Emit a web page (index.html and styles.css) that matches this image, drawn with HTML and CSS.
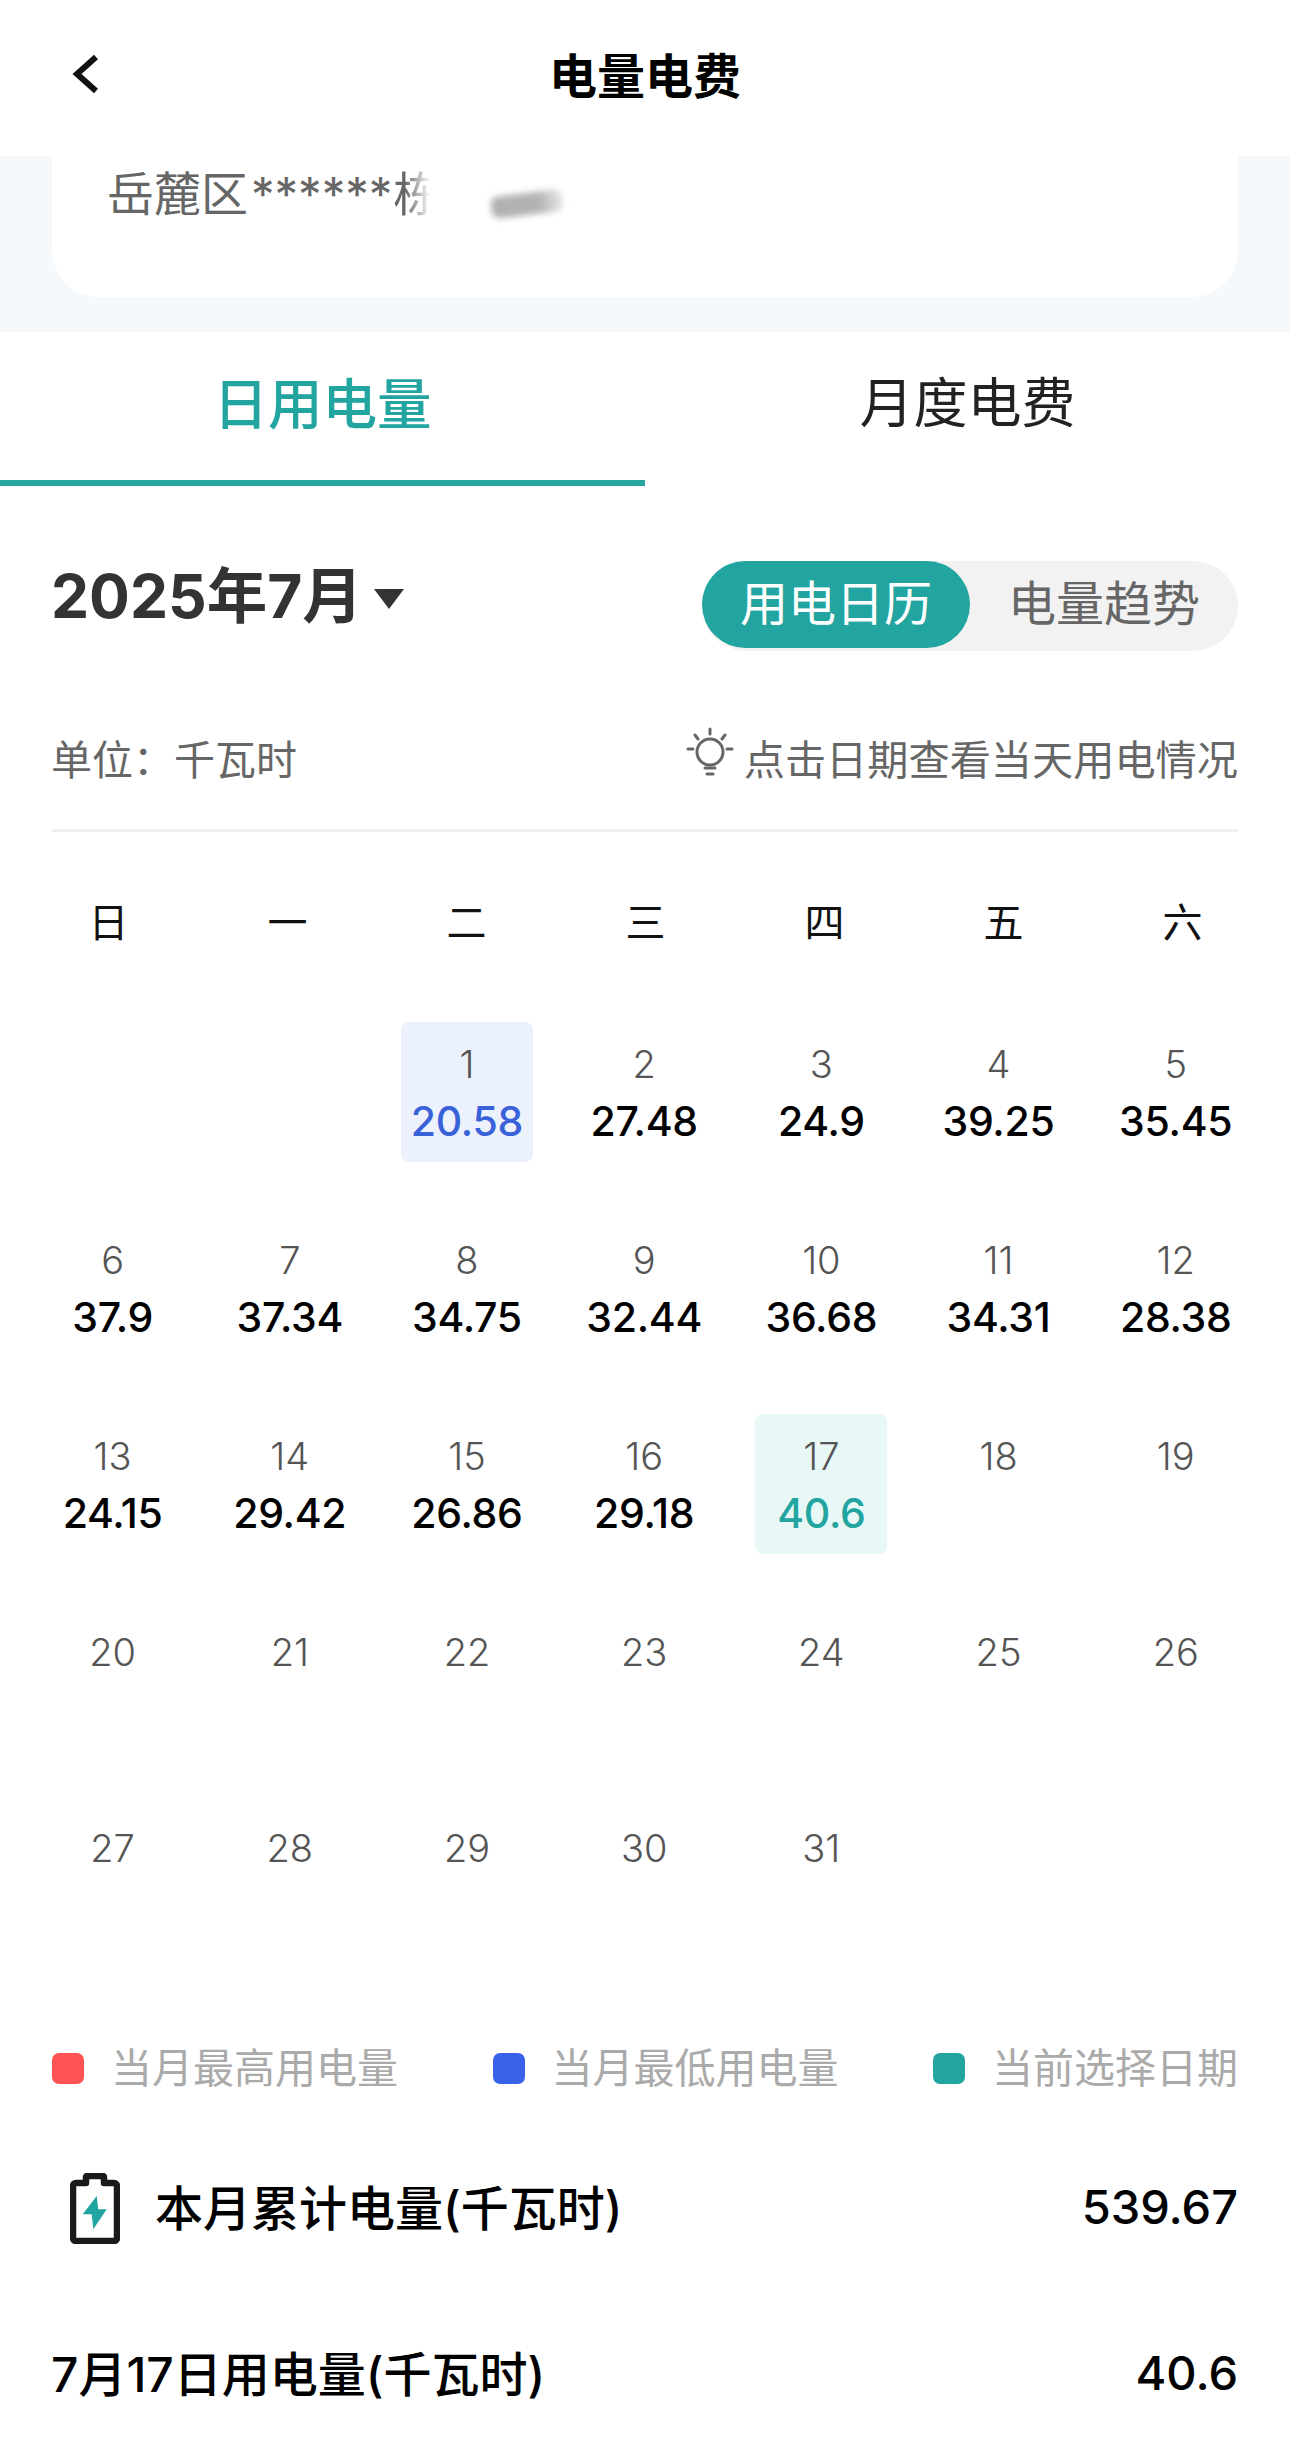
FILE: index.html
```html
<!DOCTYPE html>
<html lang="zh-CN">
<head>
    <meta charset="UTF-8">
    <meta name="viewport" content="width=device-width, initial-scale=1.0">
    <title>电量电费</title>
    <link rel="stylesheet" href="styles.css">
</head>

<body>
    <header class="topbar">
        <svg class="back-icon" width="27" height="40" viewBox="0 0 27 40"><path d="M24 3 5 20l19 17" fill="none" stroke="#111" stroke-width="6"/></svg>
        <h1>电量电费</h1>
    </header>

    <section class="address-band">
        <div class="address-card">
            <span>岳麓区</span><span class="stars">******</span><span class="address-fade">栋</span><span class="smudge"></span>
        </div>
    </section>

    <nav class="tabs">
        <div class="tab active">日用电量</div>
        <div class="tab">月度电费</div>
    </nav>

    <section class="month-row">
        <div class="month-title">2025年7月<span class="month-arrow"></span></div>
        <div class="switcher">
            <div class="switch-item on">用电日历</div>
            <div class="switch-item">电量趋势</div>
        </div>
    </section>

    <section class="unit-row">
        <div class="unit">单位：千瓦时</div>
        <div class="hint">
            <svg class="bulb" width="48" height="50" viewBox="0 0 48 50" fill="none" stroke="#666" stroke-width="3" stroke-linecap="round">
                <circle cx="24" cy="25" r="13"/>
                <path d="M24 2v5M9 8l3 4M39 8l-3 4M2 22h5M41 22h5M19 41h10M21 47h6"/>
            </svg>
            点击日期查看当天用电情况
        </div>
    </section>

    <div class="week">
        <div>日</div><div>一</div><div>二</div><div>三</div><div>四</div><div>五</div><div>六</div>
    </div>

    <div class="days">
        <div class="day"></div>
        <div class="day"></div>
        <div class="day lowest"><span class="num">1</span><span class="val">20.58</span></div>
        <div class="day"><span class="num">2</span><span class="val">27.48</span></div>
        <div class="day"><span class="num">3</span><span class="val">24.9</span></div>
        <div class="day"><span class="num">4</span><span class="val">39.25</span></div>
        <div class="day"><span class="num">5</span><span class="val">35.45</span></div>

        <div class="day"><span class="num">6</span><span class="val">37.9</span></div>
        <div class="day"><span class="num">7</span><span class="val">37.34</span></div>
        <div class="day"><span class="num">8</span><span class="val">34.75</span></div>
        <div class="day"><span class="num">9</span><span class="val">32.44</span></div>
        <div class="day"><span class="num">10</span><span class="val">36.68</span></div>
        <div class="day"><span class="num">11</span><span class="val">34.31</span></div>
        <div class="day"><span class="num">12</span><span class="val">28.38</span></div>

        <div class="day"><span class="num">13</span><span class="val">24.15</span></div>
        <div class="day"><span class="num">14</span><span class="val">29.42</span></div>
        <div class="day"><span class="num">15</span><span class="val">26.86</span></div>
        <div class="day"><span class="num">16</span><span class="val">29.18</span></div>
        <div class="day selected"><span class="num">17</span><span class="val">40.6</span></div>
        <div class="day"><span class="num">18</span></div>
        <div class="day"><span class="num">19</span></div>

        <div class="day"><span class="num">20</span></div>
        <div class="day"><span class="num">21</span></div>
        <div class="day"><span class="num">22</span></div>
        <div class="day"><span class="num">23</span></div>
        <div class="day"><span class="num">24</span></div>
        <div class="day"><span class="num">25</span></div>
        <div class="day"><span class="num">26</span></div>

        <div class="day"><span class="num">27</span></div>
        <div class="day"><span class="num">28</span></div>
        <div class="day"><span class="num">29</span></div>
        <div class="day"><span class="num">30</span></div>
        <div class="day"><span class="num">31</span></div>
    </div>

    <div class="legend">
        <div class="legend-item"><span class="dot red"></span>当月最高用电量</div>
        <div class="legend-item"><span class="dot blue"></span>当月最低用电量</div>
        <div class="legend-item"><span class="dot teal"></span>当前选择日期</div>
    </div>

    <div class="total-row first">
        <div class="total-label">
            <svg class="battery" width="50" height="71" viewBox="0 0 50 71">
                <path d="M16 10V4a1 1 0 0 1 1-1h16a1 1 0 0 1 1 1v6h10a3 3 0 0 1 3 3v52a3 3 0 0 1-3 3H6a3 3 0 0 1-3-3V13a3 3 0 0 1 3-3z" fill="#fff" stroke="#1a1a1a" stroke-width="6.5" stroke-linejoin="round"/>
                <path d="M26.7 23 12.7 41.3h9l1.6 15 13.4-20h-8.4z" fill="#22a5a0"/>
            </svg>
            本月累计电量(千瓦时)
        </div>
        <div class="total-value">539.67</div>
    </div>
    <div class="total-row second">
        <div class="total-label">7月17日用电量(千瓦时)</div>
        <div class="total-value">40.6</div>
    </div>
</body>
</html>
```

FILE: styles.css
```css
body {
    font-family: Inter, "Noto Sans CJK SC", sans-serif;
    margin: 0;
    padding: 0;
    background-color: #fff;
    color: #000;
    width: 1290px;
    height: 2446px;
    overflow: hidden;
}

.topbar {
    height: 156px;
    display: grid;
    grid-template-columns: 1fr auto 1fr;
    align-items: center;
    padding: 0 0 10px;
    box-sizing: border-box;
}

.back-icon {
    margin: 2px 0 0 72px;
}

h1 {
    font-size: 48px;
    font-weight: 700;
    margin: 0;
    grid-column: 2;
}

.address-band {
    height: 176px;
    box-sizing: border-box;
    padding: 0 52px 35px;
    background-color: #f5f9fc;
}

.address-card {
    height: 141px;
    box-sizing: border-box;
    padding-left: 55px;
    background: #fff;
    border-radius: 0 0 47px 47px;
    display: flex;
    font-size: 47px;
    line-height: 76px;
    color: #666;
}

.stars {
    margin-left: 3px;
}

.address-fade {
    margin-left: 1px;
    background: linear-gradient(90deg, #666 25%, #fff 80%);
    -webkit-background-clip: text;
    background-clip: text;
    color: transparent;
}

.smudge {
    width: 72px;
    height: 22px;
    margin: 37px 0 0 51px;
    border-radius: 8px;
    background: linear-gradient(90deg, #b2b2b2 65%, #e8e8e8);
    filter: blur(3px);
    transform: rotate(-7deg);
}

.tabs {
    display: flex;
    height: 154px;
}

.tab {
    flex: 1;
    text-align: center;
    font-size: 54px;
    font-weight: 400;
    line-height: 144px;
    color: #222;
}

    .tab.active {
        color: #22a5a0;
        font-size: 54.5px;
        font-weight: 500;
        border-bottom: 6px solid #26a69f;
        height: 148px;
    }

.month-row {
    display: flex;
    justify-content: space-between;
    align-items: flex-start;
    margin: 75px 52px 0;
}

.month-title {
    display: flex;
    align-items: center;
    font-size: 60.5px;
    font-weight: 700;
    line-height: 70px;
    color: #333;
    margin-left: -1px;
}

.month-arrow {
    width: 0;
    height: 0;
    margin: 6px 0 0 11px;
    border-left: 15px solid transparent;
    border-right: 15px solid transparent;
    border-top: 20px solid #333;
}

.switcher {
    display: flex;
    width: 536px;
    height: 90px;
    border-radius: 45px;
    background: #f2f2f2;
}

.switch-item {
    flex: 1;
    text-align: center;
    font-size: 48px;
    line-height: 86px;
    color: #666;
}

    .switch-item.on {
        flex: 0 0 268px;
        height: 87px;
        border-radius: 44px;
        background: #22a5a0;
        color: #fff;
    }

.unit-row {
    display: flex;
    justify-content: space-between;
    align-items: center;
    margin: 84px 52px 0;
    height: 50px;
    padding-bottom: 44px;
    border-bottom: 3px solid #f0f0f0;
    color: #666;
    line-height: 50px;
}

.unit {
    font-size: 41px;
    margin-left: -1px;
}

.hint {
    display: flex;
    font-size: 41.2px;
}

.bulb {
    margin: -8px 10px 0 0;
}

.week {
    display: grid;
    grid-template-columns: repeat(7, 179px);
    margin: 66px 19px 0;
    text-align: center;
    font-size: 40px;
    line-height: 50px;
    color: #111;
}

.days {
    display: grid;
    grid-template-columns: repeat(7, 177.2px);
    grid-auto-rows: 196px;
    margin: 46px 24px 0;
}

.day {
    width: 132px;
    height: 140px;
    margin: 28px auto 0;
    box-sizing: border-box;
    padding-top: 17px;
    border-radius: 8px;
    text-align: center;
}

.num {
    display: block;
    font-size: 38px;
    font-weight: 300;
    line-height: 50px;
    color: #555;
}

.val {
    display: block;
    font-size: 41px;
    font-weight: 500;
    letter-spacing: -0.3px;
    line-height: 64px;
    white-space: nowrap;
}

.lowest {
    background: #ebf1fd;
}

    .lowest .val {
        color: #3a62d8;
    }

.selected {
    background: #e8f8f7;
}

    .selected .val {
        color: #22a5a0;
    }

.legend {
    display: flex;
    justify-content: space-between;
    margin: 69px 52px 0;
    font-size: 41px;
    line-height: 50px;
    color: #aaa;
}

.legend-item {
    display: flex;
    align-items: center;
}

.dot {
    width: 32px;
    height: 31px;
    margin-right: 27px;
    border-radius: 7px;
}

.red {
    background: #ff5252;
}

.blue {
    background: #3a62e8;
}

.teal {
    background: #22a5a0;
}

.total-row {
    display: flex;
    justify-content: space-between;
    align-items: center;
    height: 80px;
    margin: 0 52px;
}

    .total-row.first {
        margin-top: 72px;
    }

    .total-row.second {
        margin-top: 86px;
    }

.total-label {
    display: flex;
    align-items: center;
    font-size: 48px;
    font-weight: 500;
    margin-left: -1px;
}

.battery {
    margin: 6px 35px 0 19px;
}

.total-value {
    font-size: 47px;
    font-weight: 500;
    padding-top: 3px;
}
```
